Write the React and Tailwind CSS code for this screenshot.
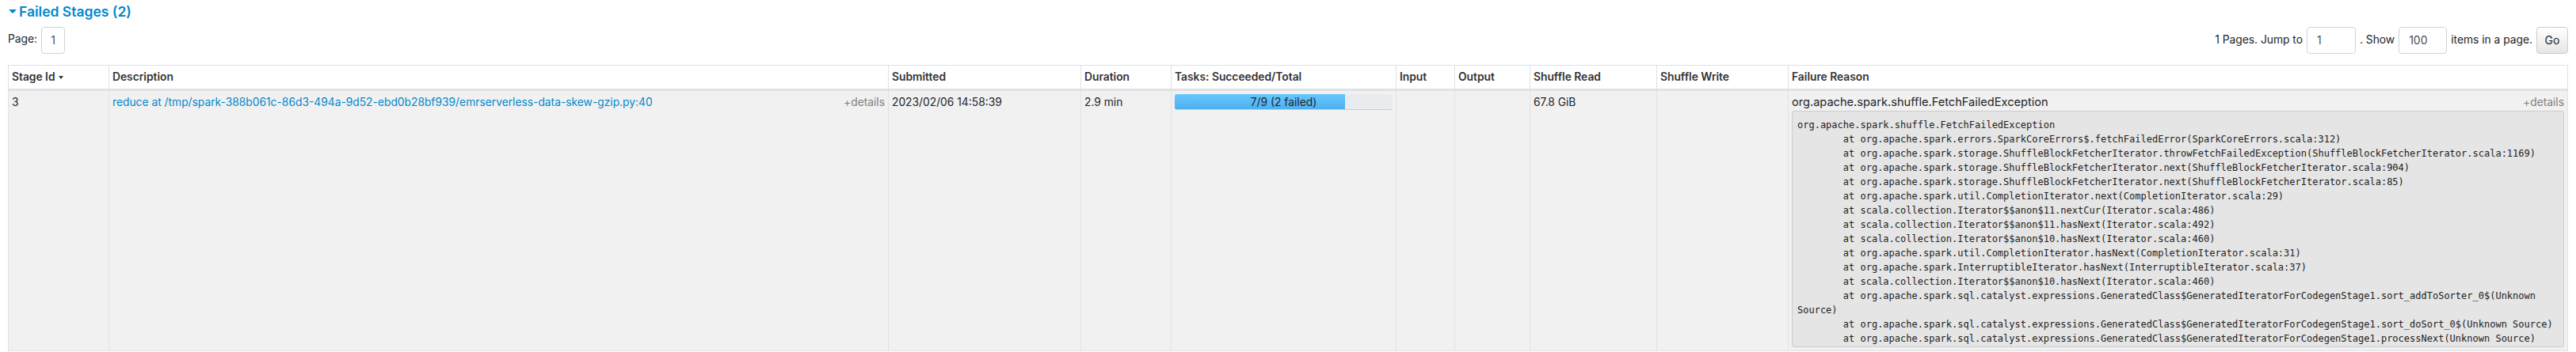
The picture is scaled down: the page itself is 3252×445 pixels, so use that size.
const frames = [
  "\tat org.apache.spark.errors.SparkCoreErrors$.fetchFailedError(SparkCoreErrors.scala:312)",
  "\tat org.apache.spark.storage.ShuffleBlockFetcherIterator.throwFetchFailedException(ShuffleBlockFetcherIterator.scala:1169)",
  "\tat org.apache.spark.storage.ShuffleBlockFetcherIterator.next(ShuffleBlockFetcherIterator.scala:904)",
  "\tat org.apache.spark.storage.ShuffleBlockFetcherIterator.next(ShuffleBlockFetcherIterator.scala:85)",
  "\tat org.apache.spark.util.CompletionIterator.next(CompletionIterator.scala:29)",
  "\tat scala.collection.Iterator$$anon$11.nextCur(Iterator.scala:486)",
  "\tat scala.collection.Iterator$$anon$11.hasNext(Iterator.scala:492)",
  "\tat scala.collection.Iterator$$anon$10.hasNext(Iterator.scala:460)",
  "\tat org.apache.spark.util.CompletionIterator.hasNext(CompletionIterator.scala:31)",
  "\tat org.apache.spark.InterruptibleIterator.hasNext(InterruptibleIterator.scala:37)",
  "\tat scala.collection.Iterator$$anon$10.hasNext(Iterator.scala:460)",
  "\tat org.apache.spark.sql.catalyst.expressions.GeneratedClass$GeneratedIteratorForCodegenStage1.sort_addToSorter_0$(Unknown Source)",
  "\tat org.apache.spark.sql.catalyst.expressions.GeneratedClass$GeneratedIteratorForCodegenStage1.sort_doSort_0$(Unknown Source)",
  "\tat org.apache.spark.sql.catalyst.expressions.GeneratedClass$GeneratedIteratorForCodegenStage1.processNext(Unknown Source)",
  "\tat org.apache.spark.sql.execution.BufferedRowIterator.hasNext(BufferedRowIterator.java:43)",
];
const trace = ["org.apache.spark.shuffle.FetchFailedException", ...frames].join("\n");

const columns = [
  { label: "Stage Id", width: "w-[127px]", sort: true },
  { label: "Description", width: "w-[984px]" },
  { label: "Submitted", width: "w-[243px]" },
  { label: "Duration", width: "w-[114px]" },
  { label: "Tasks: Succeeded/Total", width: "w-[284px]" },
  { label: "Input", width: "w-[74px]" },
  { label: "Output", width: "w-[95px]" },
  { label: "Shuffle Read", width: "w-[160px]" },
  { label: "Shuffle Write", width: "w-[166px]" },
  { label: "Failure Reason", width: "w-[984px]" },
];

const inputClass =
  "h-[34px] rounded border border-[#ced4da] bg-white px-3 text-[14px] text-[#495057]";
const cellClass = "border border-[#dee2e6] p-1 align-top";

export default function App() {
  return (
    <div className="h-[445px] overflow-hidden bg-white px-[10px] font-['Inter',sans-serif] text-[13.8px] leading-[21px] text-[#212529]">
      <h4 className="flex h-[34px] items-center gap-[3px] pb-[5px] text-[17.5px] font-semibold text-[#0088cc]">
        <span className="ml-px h-0 w-0 border-x-[5px] border-t-[5px] border-x-transparent border-t-[#0088cc]" />
        Failed Stages (2)
      </h4>

      <div className="flex h-[33px] items-center justify-between">
        <div className="flex items-center gap-[5px]">
          <span className="-mt-[3px]">Page:</span>
          <div className={`${inputClass} flex w-[30px] items-center justify-center !px-0 text-[#6c757d]`}>1</div>
        </div>
        <div className="flex items-center gap-[5px]">
          <span>1 Pages. Jump to</span>
          <div className={`${inputClass} flex w-[62px] items-center`}>1</div>
          <span>. Show</span>
          <div className={`${inputClass} flex w-[61px] items-center`}>100</div>
          <span>items in a page.</span>
          <button className="h-[34px] w-[40px] rounded border border-[#ccc] bg-gradient-to-b from-white to-[#e6e6e6] text-[14px]">Go</button>
        </div>
      </div>

      <table className="mt-[15px] w-[3231px] table-fixed border-collapse">
        <thead>
          <tr className="h-[31px] border-b-[3px] border-[#dee2e6]">
            {columns.map((c) => (
              <th key={c.label} className={`${c.width} border border-b-0 border-[#dee2e6] px-1 text-left font-semibold text-[#333]`}>
                {c.label}
                {c.sort && <span className="ml-1 inline-block h-0 w-0 -translate-y-[2px] border-x-[3px] border-t-[4px] border-x-transparent border-t-[#333]" />}
              </th>
            ))}
          </tr>
        </thead>
        <tbody>
          <tr className="bg-[#f1f1f1]">
            <td className={cellClass}>3</td>
            <td className={cellClass}>
              <div className="flex justify-between">
                <a className="text-[#0088cc]">reduce at /tmp/spark-388b061c-86d3-494a-9d52-ebd0b28bf939/emrserverless-data-skew-gzip.py:40</a>
                <span className="text-[#808080]">+details</span>
              </div>
            </td>
            <td className={cellClass}>2023/02/06 14:58:39</td>
            <td className={cellClass}>2.9 min</td>
            <td className={cellClass}>
              <div className="relative h-[20px] overflow-hidden rounded-[3px] border-b border-[#ccc] bg-[#e9ecef]">
                <div className="h-full w-[78%] bg-gradient-to-b from-[#66c7ff] to-[#4fafee]" />
                <span className="absolute inset-0 text-center leading-[20px]">7/9 (2 failed)</span>
              </div>
            </td>
            <td className={cellClass} />
            <td className={cellClass} />
            <td className={cellClass}>67.8 GiB</td>
            <td className={cellClass} />
            <td className={cellClass}>
              <div className="flex justify-between">
                <span className="text-[14.6px]">org.apache.spark.shuffle.FetchFailedException</span>
                <span className="text-[#808080]">+details</span>
              </div>
              <pre className="h-[299px] overflow-hidden whitespace-pre-wrap rounded-[3px] border border-[#ccc] bg-[#e5e5e5] px-[6px] py-2 font-['DejaVu_Sans_Mono',monospace] text-[12px] leading-[18px] text-[#222] [tab-size:8]">
                {trace}
              </pre>
            </td>
          </tr>
        </tbody>
      </table>
    </div>
  );
}
